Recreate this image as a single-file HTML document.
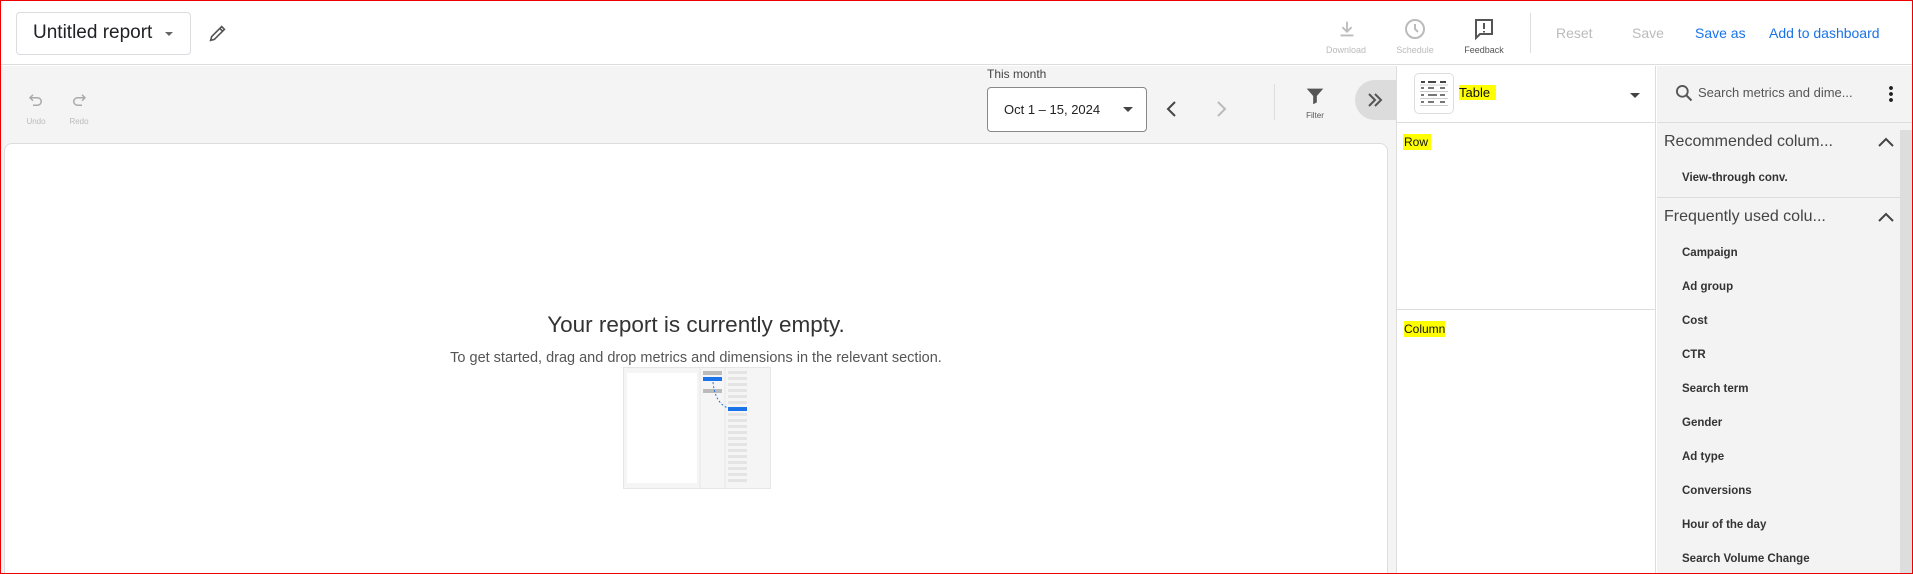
<!DOCTYPE html>
<html style="width:1913px;height:574px;overflow:hidden"><head><meta charset="utf-8"><style>
*{box-sizing:border-box;margin:0;padding:0}
body{width:1913px;height:574px;overflow:hidden;font-family:"Liberation Sans",sans-serif;background:#fff;position:relative;color:#202124}
.a{position:absolute}
.frame{position:absolute;left:0;top:0;width:1913px;height:574px;border:1px solid #e00;pointer-events:none;z-index:10}
.hl{background:#ff0;color:#111}
.lbl{font-size:9px;color:#bbb;text-align:center;width:60px}
.item{position:absolute;left:1682px;font-size:11.5px;font-weight:bold;color:#333}
</style></head><body>
<div class="frame"></div>
<div class="a" style="left:0;top:0;width:1913px;height:65px;border-bottom:1px solid #ddd;background:#fff"></div>
<div class="a" style="left:16px;top:12px;width:175px;height:43px;border:1px solid #dadce0;border-radius:4px"></div>
<div class="a" style="left:33px;top:22px;font-size:19px;color:#202124">Untitled report</div>
<div class="a" style="left:165px;top:32px;border-left:4px solid transparent;border-right:4px solid transparent;border-top:4px solid #666"></div>
<svg class="a" style="left:207px;top:22px" width="22" height="22" viewBox="0 0 24 24"><path d="M4 20l1-4L16 5l3 3L8 19z M14 7l3 3" fill="none" stroke="#555" stroke-width="1.8"/></svg>
<svg class="a" style="left:1336px;top:18px" width="22" height="22" viewBox="0 0 24 24"><path d="M12 4v11M7 10l5 5 5-5M5 19h14" fill="none" stroke="#bbb" stroke-width="2"/></svg>
<div class="a lbl" style="left:1316px;top:45px">Download</div>
<svg class="a" style="left:1403px;top:17px" width="24" height="24" viewBox="0 0 24 24"><circle cx="12" cy="12" r="9" fill="none" stroke="#bbb" stroke-width="2"/><path d="M12 7v5l3 3" fill="none" stroke="#bbb" stroke-width="2"/></svg>
<div class="a lbl" style="left:1385px;top:45px">Schedule</div>
<svg class="a" style="left:1472px;top:17px" width="24" height="24" viewBox="0 0 24 24"><path d="M4 3h16v14H8l-4 4z" fill="none" stroke="#555" stroke-width="2"/><path d="M12 6v6M12 14v1.5" stroke="#555" stroke-width="2"/></svg>
<div class="a lbl" style="left:1454px;top:45px;color:#555">Feedback</div>
<div class="a" style="left:1530px;top:13px;width:1px;height:40px;background:#ddd"></div>
<div class="a" style="left:1556px;top:25px;font-size:14px;color:#bbb">Reset</div>
<div class="a" style="left:1632px;top:25px;font-size:14px;color:#bbb">Save</div>
<div class="a" style="left:1695px;top:25px;font-size:14px;color:#1a73e8">Save as</div>
<div class="a" style="left:1769px;top:25px;font-size:14px;color:#1a73e8">Add to dashboard</div>
<div class="a" style="left:0;top:66px;width:1396px;height:508px;background:#f4f4f4"></div>
<svg class="a" style="left:27px;top:91px" width="18" height="18" viewBox="0 0 24 24"><path d="M8 5L4 9l4 4M4 9h10a5 5 0 0 1 0 10H8" fill="none" stroke="#aaa" stroke-width="2"/></svg>
<svg class="a" style="left:70px;top:91px" width="18" height="18" viewBox="0 0 24 24"><path d="M16 5l4 4-4 4M20 9H10a5 5 0 0 0 0 10h6" fill="none" stroke="#aaa" stroke-width="2"/></svg>
<div class="a lbl" style="left:6px;top:117px;width:60px;font-size:8px">Undo</div>
<div class="a lbl" style="left:49px;top:117px;width:60px;font-size:8px">Redo</div>
<div class="a" style="left:987px;top:67px;font-size:12px;color:#444">This month</div>
<div class="a" style="left:987px;top:87px;width:160px;height:45px;border:1px solid #888;border-radius:4px;background:#fff"></div>
<div class="a" style="left:1004px;top:102px;font-size:13px;color:#222">Oct 1 – 15, 2024</div>
<div class="a" style="left:1123px;top:107px;border-left:5px solid transparent;border-right:5px solid transparent;border-top:5px solid #444"></div>
<svg class="a" style="left:1163px;top:99px" width="18" height="20" viewBox="0 0 18 20"><path d="M12 3L5 10l7 7" fill="none" stroke="#444" stroke-width="2"/></svg>
<svg class="a" style="left:1212px;top:99px" width="18" height="20" viewBox="0 0 18 20"><path d="M6 3l7 7-7 7" fill="none" stroke="#bbb" stroke-width="2"/></svg>
<div class="a" style="left:1274px;top:84px;width:1px;height:36px;background:#ddd"></div>
<svg class="a" style="left:1304px;top:85px" width="22" height="22" viewBox="0 0 24 24"><path d="M3 4h18l-7 8v7l-4 2v-9z" fill="#555"/></svg>
<div class="a lbl" style="left:1285px;top:111px;color:#555;font-size:8px">Filter</div>
<div class="a" style="left:1355px;top:80px;width:50px;height:40px;border-radius:20px 0 0 20px;background:#dcdcdc"></div>
<svg class="a" style="left:1366px;top:91px" width="18" height="18" viewBox="0 0 18 18"><path d="M3 3l6 6-6 6M9 3l6 6-6 6" fill="none" stroke="#555" stroke-width="2"/></svg>
<div class="a" style="left:4px;top:143px;width:1384px;height:440px;background:#fff;border:1px solid #ddd;border-radius:8px"></div>
<div class="a" style="left:4px;top:312px;width:1384px;text-align:center;font-size:22.5px;color:#333">Your report is currently empty.</div>
<div class="a" style="left:4px;top:350px;width:1384px;text-align:center;font-size:14.5px;color:#555">To get started, drag and drop metrics and dimensions in the relevant section.</div>
<svg class="a" style="left:623px;top:367px" width="148" height="122" viewBox="0 0 148 122">
<rect x="0.5" y="0.5" width="147" height="121" fill="#f5f5f5" stroke="#e6e6e6"/>
<rect x="4" y="6" width="70" height="110" fill="#fff"/>
<line x1="77" y1="0" x2="77" y2="122" stroke="#e6e6e6"/><line x1="102" y1="0" x2="102" y2="122" stroke="#e6e6e6"/>
<rect x="80" y="4" width="19" height="4" fill="#bbb"/><rect x="80" y="10" width="19" height="4" fill="#1a73e8"/><rect x="80" y="22" width="19" height="4" fill="#bbb"/>
<g fill="#e4e4e4"><rect x="105" y="4" width="19" height="3"/><rect x="105" y="10" width="19" height="3"/><rect x="105" y="16" width="19" height="3"/><rect x="105" y="22" width="19" height="3"/><rect x="105" y="28" width="19" height="3"/><rect x="105" y="34" width="19" height="3"/><rect x="105" y="46" width="19" height="3"/><rect x="105" y="52" width="19" height="3"/><rect x="105" y="58" width="19" height="3"/><rect x="105" y="64" width="19" height="3"/><rect x="105" y="70" width="19" height="3"/><rect x="105" y="76" width="19" height="3"/><rect x="105" y="82" width="19" height="3"/><rect x="105" y="88" width="19" height="3"/><rect x="105" y="94" width="19" height="3"/><rect x="105" y="100" width="19" height="3"/><rect x="105" y="106" width="19" height="3"/><rect x="105" y="112" width="19" height="3"/></g>
<rect x="105" y="40" width="19" height="4" fill="#1a73e8"/>
<path d="M90 15 Q92 36 105 41" fill="none" stroke="#1a73e8" stroke-dasharray="2 2"/>
</svg>
<div class="a" style="left:1396px;top:66px;width:260px;height:508px;background:#fff;border-left:1px solid #ddd;border-right:1px solid #ddd"></div>
<div class="a" style="left:1396px;top:122px;width:260px;height:1px;background:#ddd"></div>
<div class="a" style="left:1396px;top:309px;width:260px;height:1px;background:#ddd"></div>
<div class="a" style="left:1414px;top:73px;width:40px;height:41px;border:1px solid #ddd;border-radius:5px;background:#fff"></div>
<svg class="a" style="left:1418px;top:78px" width="32" height="32" viewBox="0 0 32 32"><g stroke="#777" stroke-width="2"><path d="M3 4h4M10 4h8M22 4h6" stroke="#444"/><path d="M3 10h3M10 10h6M22 10h5M3 17h3M10 17h9M22 17h5M3 24h3M10 24h6M22 24h5"/></g><g stroke="#ccc"><path d="M2 7h28M2 13.5h28M2 20.5h28M2 27.5h28"/></g></svg>
<div class="a hl" style="left:1459px;top:85px;font-size:13px;padding:0 6px 0 0">Table</div>
<div class="a" style="left:1630px;top:93px;border-left:5px solid transparent;border-right:5px solid transparent;border-top:5px solid #444"></div>
<div class="a hl" style="left:1403px;top:134px;font-size:12px;padding:1px 3px 1px 1px">Row</div>
<div class="a hl" style="left:1404px;top:321px;font-size:12px;padding:1px 0">Column</div>
<div class="a" style="left:1657px;top:66px;width:256px;height:508px;background:#f3f3f3"></div>
<div class="a" style="left:1657px;top:122px;width:256px;height:1px;background:#ddd"></div>
<svg class="a" style="left:1674px;top:83px" width="20" height="20" viewBox="0 0 24 24"><circle cx="10" cy="10" r="6.5" fill="none" stroke="#555" stroke-width="2.2"/><path d="M15 15l6 6" stroke="#555" stroke-width="2.4"/></svg>
<div class="a" style="left:1698px;top:85px;font-size:13px;color:#555">Search metrics and dime...</div>
<div class="a" style="left:1889px;top:85px;width:4px;height:18px;background:radial-gradient(circle,#222 1.8px,transparent 2px) 0 0/4px 6px"></div>
<div class="a" style="left:1900px;top:130px;width:13px;height:444px;background:#ddd"></div>
<div class="a" style="left:1664px;top:133px;font-size:16px;color:#444">Recommended colum...</div>
<svg class="a" style="left:1877px;top:136px" width="18" height="12" viewBox="0 0 18 12"><path d="M2 10l7-7 7 7" fill="none" stroke="#444" stroke-width="2"/></svg>
<div class="item" style="top:172px">View-through conv.</div>
<div class="a" style="left:1657px;top:197px;width:243px;height:1px;background:#ddd"></div>
<div class="a" style="left:1664px;top:208px;font-size:16px;color:#444">Frequently used colu...</div>
<svg class="a" style="left:1877px;top:211px" width="18" height="12" viewBox="0 0 18 12"><path d="M2 10l7-7 7 7" fill="none" stroke="#444" stroke-width="2"/></svg>
<div class="item" style="top:247px">Campaign</div>
<div class="item" style="top:281px">Ad group</div>
<div class="item" style="top:315px">Cost</div>
<div class="item" style="top:349px">CTR</div>
<div class="item" style="top:383px">Search term</div>
<div class="item" style="top:417px">Gender</div>
<div class="item" style="top:451px">Ad type</div>
<div class="item" style="top:485px">Conversions</div>
<div class="item" style="top:519px">Hour of the day</div>
<div class="item" style="top:553px">Search Volume Change</div>
</body></html>
